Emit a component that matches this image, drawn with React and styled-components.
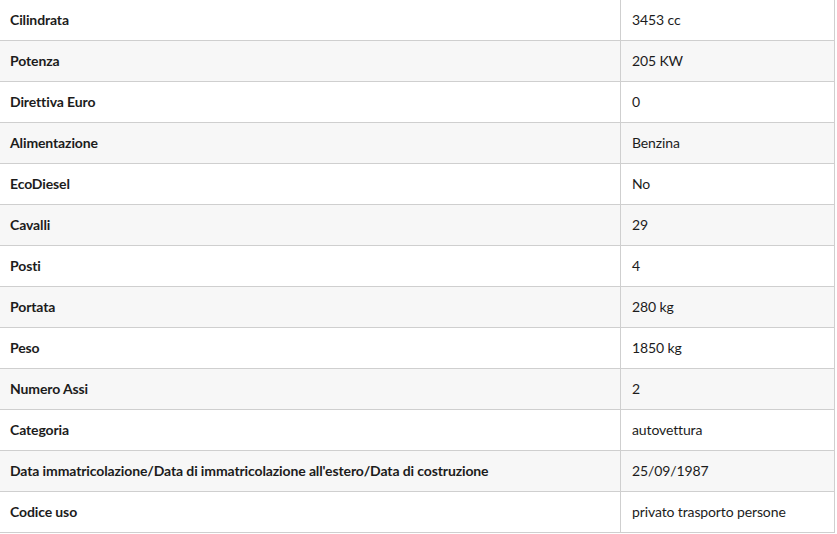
import React from "react";
import styled, { createGlobalStyle } from "styled-components";

const GlobalStyle = createGlobalStyle`
  html, body {
    margin: 0;
    padding: 0;
    background: #ffffff;
  }
  body {
    font-family: Lato, "Noto Sans", sans-serif;
    color: #1c1c1c;
  }
`;

const Table = styled.table`
  width: 835px;
  border-collapse: collapse;
  font-size: 14px;
  letter-spacing: -0.12px;
`;

const Row = styled.tr`
  height: 41px;
  background: ${(props) => (props.striped ? "#f7f7f7" : "#ffffff")};
  border-bottom: 1px solid #cfcfcf;
  &:first-child {
    height: 40px;
  }
`;

const Label = styled.td`
  width: 610px;
  padding: 0 0 0 10px;
  font-weight: 700;
  border-right: 1px solid #cfcfcf;
  vertical-align: middle;
`;

const Value = styled.td`
  padding: 0 0 0 11px;
  border-right: 1px solid #cfcfcf;
  vertical-align: middle;
`;

const rows = [
  ["Cilindrata", "3453 cc"],
  ["Potenza", "205 KW"],
  ["Direttiva Euro", "0"],
  ["Alimentazione", "Benzina"],
  ["EcoDiesel", "No"],
  ["Cavalli", "29"],
  ["Posti", "4"],
  ["Portata", "280 kg"],
  ["Peso", "1850 kg"],
  ["Numero Assi", "2"],
  ["Categoria", "autovettura"],
  [
    "Data immatricolazione/Data di immatricolazione all'estero/Data di costruzione",
    "25/09/1987",
  ],
  ["Codice uso", "privato trasporto persone"],
];

export default function App() {
  return (
    <>
      <GlobalStyle />
      <Table>
        <tbody>
          {rows.map(([label, value], idx) => (
            <Row key={label} striped={idx % 2 === 1}>
              <Label>{label}</Label>
              <Value>{value}</Value>
            </Row>
          ))}
        </tbody>
      </Table>
    </>
  );
}
